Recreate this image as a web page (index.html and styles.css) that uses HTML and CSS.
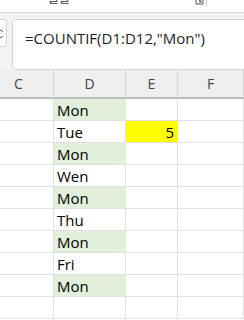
FILE: index.html
```
<!DOCTYPE html>
<html lang="ko">
<head>
    <meta charset="UTF-8">
    <meta name="viewport" content="width=device-width, initial-scale=1.0">
    <title>COUNTIF</title>
    <link rel="stylesheet" href="styles.css">
</head>
<body>
    <!-- Ribbon strip (cut off at the top) -->
    <div class="ribbon">
        <span class="group-label">글꼴</span>
        <svg class="launcher" width="9" height="7" viewBox="0 0 9 7">
            <path d="M1 0 V5 H8 V0" fill="none" stroke="#555" stroke-width="1"/>
            <path d="M3 0 L6 3 M6 1 V3 H4" fill="none" stroke="#555" stroke-width="1"/>
        </svg>
        <span class="group-sep"></span>
    </div>

    <!-- Formula bar -->
    <div class="formula-bar">
        <div class="name-box">
            <svg class="name-arrow" width="5" height="8" viewBox="0 0 5 8">
                <path d="M0 2 L2 0 L4 2 M0 6 L2 8 L4 6" fill="none" stroke="#666" stroke-width="1"/>
            </svg>
        </div>
        <div class="formula-box">=COUNTIF(D1:D12,"Mon")</div>
    </div>

    <!-- Sheet -->
    <div class="sheet">
        <div class="col-head">C</div>
        <div class="col-head">D</div>
        <div class="col-head">E</div>
        <div class="col-head">F</div>

        <div class="cell"></div><div class="cell green">Mon</div><div class="cell"></div><div class="cell"></div>
        <div class="cell"></div><div class="cell">Tue</div><div class="cell yellow num">5</div><div class="cell"></div>
        <div class="cell"></div><div class="cell green">Mon</div><div class="cell"></div><div class="cell"></div>
        <div class="cell"></div><div class="cell">Wen</div><div class="cell"></div><div class="cell"></div>
        <div class="cell"></div><div class="cell green">Mon</div><div class="cell"></div><div class="cell"></div>
        <div class="cell"></div><div class="cell">Thu</div><div class="cell"></div><div class="cell"></div>
        <div class="cell"></div><div class="cell green">Mon</div><div class="cell"></div><div class="cell"></div>
        <div class="cell"></div><div class="cell">Fri</div><div class="cell"></div><div class="cell"></div>
        <div class="cell"></div><div class="cell green">Mon</div><div class="cell"></div><div class="cell"></div>
        <div class="cell"></div><div class="cell"></div><div class="cell"></div><div class="cell"></div>
    </div>
</body>
</html>
```

FILE: styles.css
```
* {
    margin: 0;
    padding: 0;
    box-sizing: border-box;
}

body {
    width: 244px;
    height: 320px;
    overflow: hidden;
    background: #ffffff;
    font-family: "Open Sans", "Noto Sans", "Noto Sans CJK KR", sans-serif;
    color: #000;
}

/* Ribbon */
.ribbon {
    height: 13px;
    border-bottom: 1px solid #d6d6d6;
    position: relative;
    overflow: hidden;
}

.group-label {
    position: absolute;
    left: 48px;
    top: -8px;
    font-size: 12px;
    line-height: 14px;
    color: #333;
}

.launcher {
    position: absolute;
    left: 195px;
    top: -1px;
}

.group-sep {
    position: absolute;
    left: 206px;
    top: 0;
    width: 1px;
    height: 6px;
    background: #c8c8c8;
}

/* Formula bar */
.formula-bar {
    background: #f3f3f3;
    height: 57px;
    padding-top: 6px;
    display: flex;
    gap: 5px;
}

.name-box {
    width: 7px;
    height: 28px;
    background: #fff;
    border: 1px solid #d4d4d4;
    border-left: none;
    border-radius: 0 4px 4px 0;
    display: flex;
    align-items: center;
    padding-top: 2px;
}

.name-arrow {
    margin-left: -1px;
}

.formula-box {
    flex: 1;
    height: 51px;
    margin-right: -6px;
    background: #fff;
    border: 1px solid #d4d4d4;
    border-radius: 4px;
    padding: 8px 0 0 12px;
    font-size: 15px;
    line-height: 20px;
    color: #1e1e1e;
    white-space: nowrap;
}

/* Sheet grid */
.sheet {
    display: grid;
    grid-template-columns: 54px 72px 52px 1fr;
    grid-template-rows: 29px;
    grid-auto-rows: 22px;
}

.col-head {
    background: #efefef;
    border-right: 1px solid #d4d4d4;
    border-bottom: 2px solid #bdbdbd;
    color: #444;
    font-size: 14px;
    display: flex;
    align-items: center;
    justify-content: center;
    padding-bottom: 1px;
}

.col-head:first-child {
    justify-content: flex-start;
    padding-left: 14px;
}

.cell {
    border-right: 1px solid #e1e1e1;
    border-bottom: 1px solid #e1e1e1;
    font-size: 15px;
    line-height: 20px;
    padding-left: 3px;
    display: flex;
    align-items: flex-end;
}

.green {
    background: #e2efda;
    border-right-color: #e2efda;
}

.yellow {
    background: #ffff00;
    border-right-color: #ffff00;
}

.num {
    justify-content: flex-end;
    padding-right: 3px;
}
```
